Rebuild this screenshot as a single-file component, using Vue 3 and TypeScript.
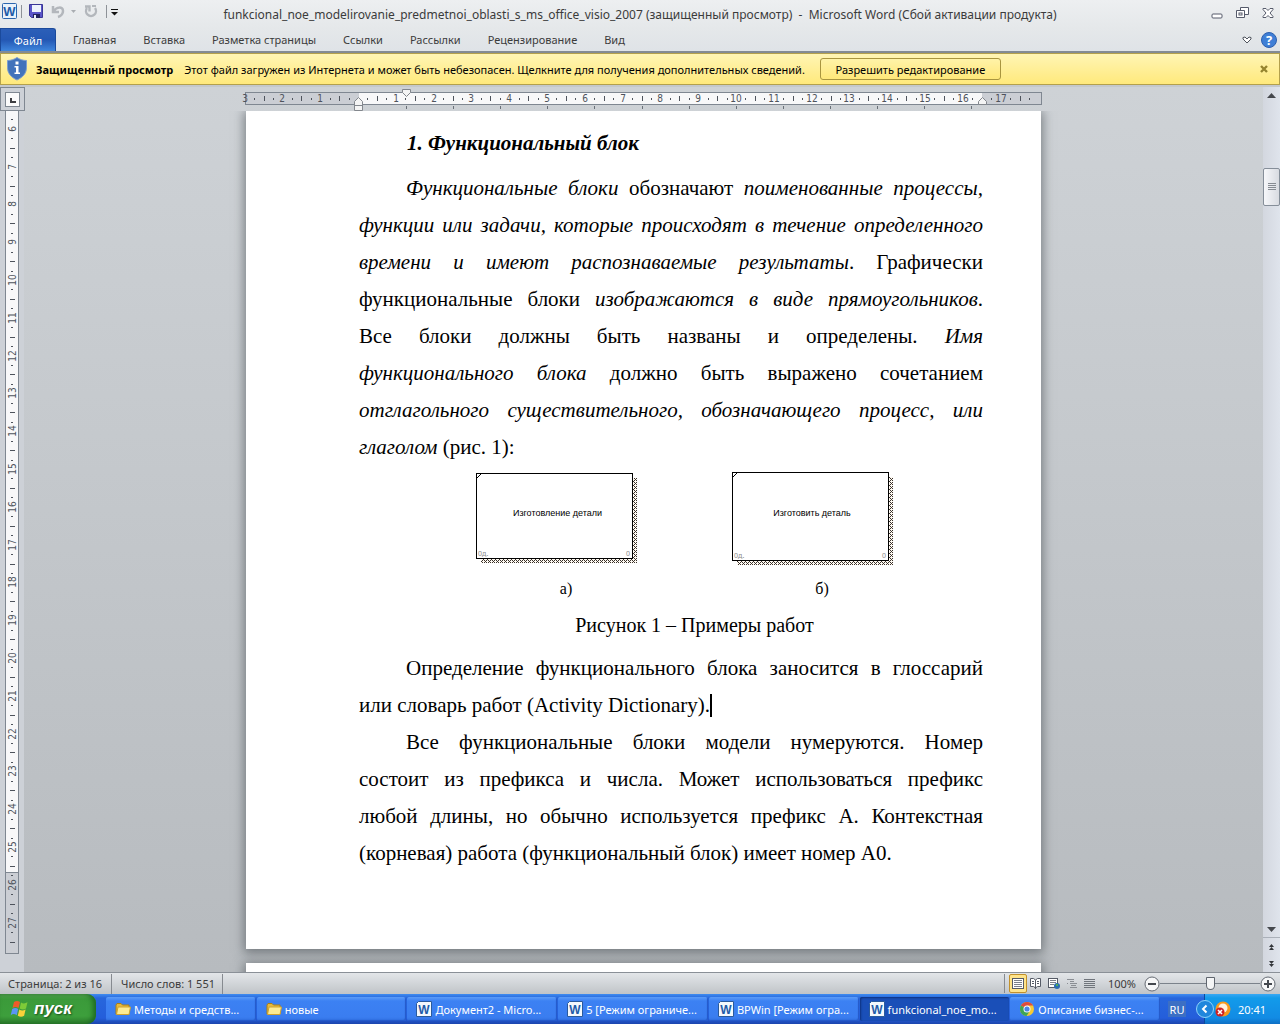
<script setup lang="ts">
import { ref } from 'vue'

interface Run {
  text: string
  italic?: boolean
}
interface Line {
  runs: Run[]
  indent?: boolean
  last?: boolean
  caret?: boolean
}
interface Task {
  icon: 'folder' | 'word' | 'chrome'
  label: string
  active?: boolean
}
interface Mark {
  pos: number
  label?: string
  half?: boolean
}

const CM = 37.8
const tabs = ['Главная', 'Вставка', 'Разметка страницы', 'Ссылки', 'Рассылки', 'Рецензирование', 'Вид']
const zoom = ref(50)

const r = (text: string): Run => ({ text })
const i = (text: string): Run => ({ text, italic: true })

const intro: Line[] = [
  { indent: true, runs: [i('Функциональные блоки'), r(' обозначают '), i('поименованные процессы,')] },
  { runs: [i('функции или задачи, которые происходят в течение определенного')] },
  { runs: [i('времени и имеют распознаваемые результаты'), r('. Графически')] },
  { runs: [r('функциональные блоки '), i('изображаются в виде прямоугольников'), r('.')] },
  { runs: [r('Все блоки должны быть названы и определены. '), i('Имя')] },
  { runs: [i('функционального блока'), r(' должно быть выражено сочетанием')] },
  { runs: [i('отглагольного существительного, обозначающего процесс, или')] },
  { last: true, runs: [i('глаголом'), r(' (рис. 1):')] },
]
const definition: Line[] = [
  { indent: true, runs: [r('Определение функционального блока заносится в глоссарий')] },
  { last: true, caret: true, runs: [r('или словарь работ (Activity Dictionary).')] },
]
const numbering: Line[] = [
  { indent: true, runs: [r('Все функциональные блоки модели нумеруются. Номер')] },
  { runs: [r('состоит из префикса и числа. Может использоваться префикс')] },
  { runs: [r('любой длины, но обычно используется префикс А. Контекстная')] },
  { last: true, runs: [r('(корневая) работа (функциональный блок) имеет номер А0.')] },
]

const figures = [
  { label: 'Изготовление детали', caption: 'а)', top: 1, height: 86, x: 38, width: 87 },
  { label: 'Изготовить деталь', caption: 'б)', top: 0, height: 89, x: 42, width: 76 },
]

function marks(origin: number, from: number, to: number, min: number, max: number): Mark[] {
  const out: Mark[] = []
  for (let q = from * 4; q <= to * 4; q++) {
    if (q === 0) continue
    const pos = Math.round(origin + (q * CM) / 4)
    if (pos < min || pos > max) continue
    if (q % 4 === 0) out.push({ pos, label: String(Math.abs(q / 4)) })
    else out.push({ pos, half: q % 2 === 0 })
  }
  return out
}
const across = marks(113, -3, 18, 0, 788).filter((m) => m.pos < 732 || m.pos > 742)
const down = marks(-209, 5, 28, 6, 836)
const stops = Array.from({ length: 13 }, (_, n) => Math.round(161 + n * 47.1))

const tasks: Task[] = [
  { icon: 'folder', label: 'Методы и средств...' },
  { icon: 'folder', label: 'новые' },
  { icon: 'word', label: 'Документ2 - Micro...' },
  { icon: 'word', label: '5 [Режим ограниче...' },
  { icon: 'word', label: 'BPWin [Режим огра...' },
  { icon: 'word', label: 'funkcional_noe_mo...', active: true },
  { icon: 'chrome', label: 'Описание бизнес-...' },
]
</script>

<template>
  <div class="desktop">
    <header class="titlebar">
      <div class="quick">
        <svg width="17" height="17" viewBox="0 0 17 17">
          <rect x="1.500" y=".5" width="14" height="15" rx="1" fill="#e9f2fb" stroke="#2c66ae" />
          <text x="8.500" y="13" class="wordmark" text-anchor="middle" font-size="13">W</text>
        </svg>
        <span class="divider"></span>
        <button class="bare" aria-label="Сохранить">
          <svg width="15" height="15" viewBox="0 0 15 15">
            <path d="M.5 .5h13v13H2.500l-2-2z" fill="#5a55c8" stroke="#3a3796" />
            <rect x="3" y="1" width="9" height="7" fill="#eef3fc" />
            <rect x="4" y="10" width="7" height="4" fill="#23235e" />
            <rect x="5" y="11" width="2" height="3" fill="#e9eefc" />
          </svg>
        </button>
        <button class="bare undo" aria-label="Отменить">
          <svg width="26" height="15" viewBox="0 0 26 15">
            <path d="M2 2v6h6M3 7c2-4 9-5 9 0 0 3-2 5-5 6" fill="none" stroke="#b3b7bc" stroke-width="2.500" />
            <path d="M20 6h5l-2.500 3z" fill="#a9adb2" />
          </svg>
        </button>
        <button class="bare" aria-label="Повторить">
          <svg width="14" height="15" viewBox="0 0 14 15">
            <path d="M3 4a5 5 0 1 0 8 0M1 2.500h4.500v5" fill="none" stroke="#b3b7bc" stroke-width="2.400" />
            <path d="M8 1h4v2H8z" fill="#b3b7bc" />
          </svg>
        </button>
        <span class="divider late"></span>
        <button class="bare" aria-label="Настройка панели">
          <svg width="7" height="8" viewBox="0 0 7 8">
            <path d="M0 1.500h7" stroke="#111" />
            <path d="M0 4h7L3.500 7.500z" fill="#111" />
          </svg>
        </button>
      </div>
      <h1>funkcional_noe_modelirovanie_predmetnoi_oblasti_s_ms_office_visio_2007 (защищенный просмотр)&nbsp; -&nbsp; Microsoft Word (Сбой активации продукта)</h1>
      <div class="winbuttons">
        <button class="bare" aria-label="Свернуть">
          <svg width="12" height="12" viewBox="0 0 12 12">
            <rect x="1" y="7" width="10" height="4" rx="1" fill="#fff" stroke="#565b6b" />
          </svg>
        </button>
        <button class="bare" aria-label="Восстановить">
          <svg width="13" height="12" viewBox="0 0 13 12">
            <path d="M4.500 .5h8v7h-8z" fill="#fff" stroke="#565b6b" />
            <path d="M.5 3.500h8v7h-8z" fill="#fff" stroke="#565b6b" />
            <rect x="3" y="6" width="3" height="2" fill="#fff" stroke="#565b6b" />
          </svg>
        </button>
        <button class="bare" aria-label="Закрыть">
          <svg width="12" height="12" viewBox="0 0 12 12">
            <path d="M1 1.500h3l2 2 2-2h3v1L8 6l3 3.500v1H8l-2-2-2 2H1v-1L4 6 1 2.500z" fill="#fff" stroke="#565b6b" />
          </svg>
        </button>
      </div>
    </header>

    <nav class="ribbon">
      <button class="file">Файл</button>
      <button v-for="tab in tabs" :key="tab" class="tab">{{ tab }}</button>
      <div class="ribbon-end">
        <button class="bare" aria-label="Развернуть ленту">
          <svg width="10" height="8" viewBox="0 0 10 8">
            <path d="M1 1.500L3 1l2 2 2-2 2 .5v1.500L5 7 1 3z" fill="#fff" stroke="#4e535c" />
          </svg>
        </button>
        <button class="bare" aria-label="Справка">
          <svg width="16" height="16" viewBox="0 0 16 16">
            <circle cx="8" cy="8" r="7.500" fill="#3f7fd6" stroke="#2d5fae" />
            <text x="8" y="13" text-anchor="middle" class="help" font-size="13">?</text>
          </svg>
        </button>
      </div>
    </nav>

    <section class="notice">
      <svg width="20" height="24" viewBox="0 0 20 24">
        <path d="M10 .5c3 2 6 3 9.500 3v7c0 6-4 10-9.500 12.500C4.500 20.500.5 16.500.5 10.500v-7C4 3.500 7 2.500 10 .5z" fill="#4273bb" stroke="#7f9fcd" />
        <path d="M8.500 4.500h3v3h-3zM7.500 9h4v6.500h1.500V17h-5.500v-1.500H9V10.500H7.500z" fill="#fff" />
      </svg>
      <strong>Защищенный просмотр</strong>
      <span class="message">Этот файл загружен из Интернета и может быть небезопасен. Щелкните для получения дополнительных сведений.</span>
      <button class="enable">Разрешить редактирование</button>
      <button class="bare dismiss" aria-label="Скрыть сообщение">
        <svg width="8" height="8" viewBox="0 0 8 8">
          <path d="M1 1l6 6M7 1L1 7" stroke="#95842f" stroke-width="2.400" />
        </svg>
      </button>
    </section>

    <main class="workspace">
      <aside class="side">
        <button class="tabstop" aria-label="Позиция табуляции">
          <svg width="15" height="15" viewBox="0 0 15 15">
            <rect x=".5" y=".5" width="14" height="14" fill="#fbfbfb" stroke="#7f8791" />
            <path d="M6 6v4h5" fill="none" stroke="#3e3e42" stroke-width="2" />
          </svg>
        </button>
        <svg class="vruler" width="15" height="843" viewBox="0 0 15 843">
          <rect x=".5" y="-1" width="13" height="843.500" fill="#cbced4" stroke="#7f8791" />
          <rect x="1" y="0" width="12" height="761" fill="#f8f8f9" />
          <path d="M0 761.500h14" stroke="#7f8791" />
          <template v-for="m in down" :key="m.pos">
            <text v-if="m.label" class="mark" text-anchor="middle" :transform="`translate(11 ${m.pos}) rotate(-90)`">{{ m.label }}</text>
            <rect v-else :x="m.half ? 5 : 6" :y="m.pos" :width="m.half ? 5 : 2" height="1" fill="#4e535c" />
          </template>
        </svg>
      </aside>

      <div class="canvas">
        <div class="hruler">
          <svg width="797" height="24" viewBox="0 0 797 24">
            <rect x=".5" y="5.500" width="796" height="12" fill="#cbced4" stroke="#7f8791" />
            <rect x="114" y="6" width="623" height="11" fill="#f8f8f9" />
            <template v-for="m in across" :key="m.pos">
              <text v-if="m.label" class="mark" text-anchor="middle" :x="m.pos" y="15">{{ m.label }}</text>
              <rect v-else :x="m.pos" :y="m.half ? 9 : 11" width="1" :height="m.half ? 5 : 2" fill="#4e535c" />
            </template>
            <rect v-for="s in stops" :key="s" :x="s" y="19" width="1" height="3" fill="#6a7078" />
            <path d="M157.500 2.500h8v3l-4 4-4-4z" fill="#f4f4f4" stroke="#83878d" />
            <path d="M113.500 10.500l4 4v9h-8v-9zM109.500 18.500h8" fill="#f4f4f4" stroke="#83878d" />
            <path d="M737.500 10.500l4 4v3h-8v-3z" fill="#f4f4f4" stroke="#83878d" />
          </svg>
        </div>

        <div class="pages">
          <article class="page">
            <h2>1. Функциональный блок</h2>
            <p>
              <span v-for="(line, n) in intro" :key="n" class="line" :class="{ indent: line.indent, last: line.last }"><template v-for="(run, k) in line.runs" :key="k"><em v-if="run.italic">{{ run.text }}</em><template v-else>{{ run.text }}</template></template></span>
            </p>
            <div class="figures">
              <figure v-for="f in figures" :key="f.caption">
                <svg width="162" height="94" viewBox="0 0 162 94">
                  <defs>
                    <pattern id="hatch" width="4" height="4" patternUnits="userSpaceOnUse">
                      <rect width="4" height="4" fill="#fffaf2" />
                      <path d="M0 0h1v1H0zM1 1h1v1H1zM2 0h1v1H2zM0 2h1v1H0zM3 3h1v1H3zM2 2h1v1H2z" fill="#3a322c" />
                    </pattern>
                  </defs>
                  <rect x="5" :y="f.top + 5" width="156" :height="f.height - 1" fill="url(#hatch)" />
                  <rect x=".5" :y="f.top + 0.5" width="156" :height="f.height - 1" fill="#fff" stroke="#000" />
                  <path :d="`M1 ${f.top + 5}l4-4`" stroke="#000" />
                  <text :x="f.x + f.width / 2" y="44" class="block-name" text-anchor="middle">{{ f.label }}</text>
                  <text x="2" :y="f.top + f.height - 3" class="block-note">0д.</text>
                  <text x="154" :y="f.top + f.height - 3" class="block-note" text-anchor="end">0</text>
                </svg>
                <figcaption>{{ f.caption }}</figcaption>
              </figure>
            </div>
            <p class="caption">Рисунок 1 – Примеры работ</p>
            <p>
              <span v-for="(line, n) in definition" :key="n" class="line" :class="{ indent: line.indent, last: line.last }"><template v-for="(run, k) in line.runs" :key="k">{{ run.text }}</template><span v-if="line.caret" class="caret"></span></span>
            </p>
            <p>
              <span v-for="(line, n) in numbering" :key="n" class="line" :class="{ indent: line.indent, last: line.last }"><template v-for="(run, k) in line.runs" :key="k">{{ run.text }}</template></span>
            </p>
          </article>
          <article class="page next"></article>
        </div>
      </div>

      <div class="scroll">
        <button class="bare" aria-label="Вверх">
          <svg width="9" height="5" viewBox="0 0 9 5"><path d="M0 5h9L4.500 0z" fill="#45484d" /></svg>
        </button>
        <div class="track">
          <div class="thumb">
            <svg width="8" height="8" viewBox="0 0 8 8"><path d="M0 .5h8M0 2.500h8M0 4.500h8M0 6.500h8" stroke="#868b92" /></svg>
          </div>
        </div>
        <button class="bare down" aria-label="Вниз">
          <svg width="9" height="5" viewBox="0 0 9 5"><path d="M0 0h9L4.500 5z" fill="#45484d" /></svg>
        </button>
        <button class="bare jump" aria-label="Предыдущая страница">
          <svg width="5" height="6" viewBox="0 0 5 6"><path d="M0 3h5L2.500 0zM0 6h5L2.500 3z" fill="#33363a" /></svg>
        </button>
        <button class="bare jump" aria-label="Следующая страница">
          <svg width="5" height="6" viewBox="0 0 5 6"><path d="M0 0h5L2.500 3zM0 3h5L2.500 6z" fill="#33363a" /></svg>
        </button>
      </div>
    </main>

    <footer class="status">
      <span class="cell">Страница: 2 из 16</span>
      <span class="cell words">Число слов: 1 551</span>
      <div class="views">
        <button class="bare view on" aria-label="Разметка страницы">
          <svg width="12" height="11" viewBox="0 0 12 11">
            <rect x=".5" y=".5" width="11" height="10" fill="#fff" stroke="#565b66" />
            <path d="M2 2.500h8M2 4.500h8M2 6.500h8M2 8.500h8" stroke="#7b808a" />
          </svg>
        </button>
        <button class="bare view" aria-label="Режим чтения">
          <svg width="11" height="11" viewBox="0 0 11 11">
            <path d="M.5 .5h3l2 1.500 2-1.500h3v8h-3l-2 1.500-2-1.500h-3zM5.500 2v9" fill="#fff" stroke="#565b66" />
            <path d="M2 3.500h2M2 5.500h2M7 3.500h2M7 5.500h2" stroke="#565b66" />
          </svg>
        </button>
        <button class="bare view" aria-label="Веб-документ">
          <svg width="12" height="11" viewBox="0 0 12 11">
            <rect x=".5" y=".5" width="9" height="9" fill="#fff" stroke="#565b66" />
            <path d="M2 2.500h6M2 4.500h6M2 6.500h4" stroke="#7b808a" />
            <circle cx="9" cy="8" r="3" fill="#2b6cb0" />
            <path d="M8 6h2v2H8z" fill="#4fae52" />
          </svg>
        </button>
        <button class="bare view" aria-label="Структура">
          <svg width="10" height="9" viewBox="0 0 10 9"><path d="M0 .5h7M3 2.500h4M3 4.500h7M4 6.500h5M3 8.500h7M0 4.500h1" stroke="#8a8e94" /></svg>
        </button>
        <button class="bare view" aria-label="Черновик">
          <svg width="11" height="9" viewBox="0 0 11 9"><path d="M0 .5h11M0 2.500h11M0 4.500h11M0 6.500h11M0 8.500h11" stroke="#6f747b" /></svg>
        </button>
      </div>
      <label class="percent" for="zoom">100%</label>
      <button class="bare" aria-label="Уменьшить">
        <svg width="16" height="16" viewBox="0 0 16 16">
          <circle cx="8" cy="8" r="7" fill="#f6f7f8" stroke="#666b74" /><path d="M4 8h8" stroke="#43474e" stroke-width="2" />
        </svg>
      </button>
      <input id="zoom" v-model="zoom" class="slider" type="range" min="0" max="100" />
      <button class="bare" aria-label="Увеличить">
        <svg width="16" height="16" viewBox="0 0 16 16">
          <circle cx="8" cy="8" r="7" fill="#f6f7f8" stroke="#666b74" /><path d="M4 8h8M8 4v8" stroke="#43474e" stroke-width="2" />
        </svg>
      </button>
    </footer>

    <div class="taskbar">
      <button class="start">
        <svg width="20" height="20" viewBox="0 0 20 20">
          <path d="M4 3c2-1.500 4-1.500 6 0L8.500 9C6.500 7.500 4.500 7.500 2.500 9z" fill="#ef5a2a" />
          <path d="M11 3.500c2 1.200 4 1.200 6.500-.2L16 9.500c-2 1.300-4 1.300-6.300 0z" fill="#7ecb38" />
          <path d="M2.200 10c2-1.300 4-1.300 6 0l-1.500 6.200c-2-1.500-4-1.500-6 0z" fill="#5b95f5" />
          <path d="M9.300 10.500c2 1.200 4 1.200 6.300 0l-1.500 6.200c-2 1.300-4 1.300-6.300 0z" fill="#fbd13a" />
        </svg>
        <span>пуск</span>
      </button>
      <div class="tasks">
        <button v-for="t in tasks" :key="t.label" class="task" :class="{ active: t.active }">
          <svg v-if="t.icon === 'folder'" width="16" height="16" viewBox="0 0 16 16">
            <path d="M1 4l1-1.500h4L7.500 4H14v9H1z" fill="#e6b93c" stroke="#a87e16" />
            <path d="M3 6h12.500L14 13.500H1.500z" fill="#fdeb92" stroke="#d0a32e" />
          </svg>
          <svg v-else-if="t.icon === 'word'" width="16" height="16" viewBox="0 0 16 16">
            <path d="M2.500 .5h13v15H.5v-13z" fill="#f3f8fd" stroke="#2a5a9c" />
            <text x="8" y="13" class="wordmark" text-anchor="middle" font-size="12">W</text>
          </svg>
          <svg v-else width="16" height="16" viewBox="0 0 16 16">
            <circle cx="8" cy="8" r="7" fill="#f6cb35" />
            <path d="M8 8L1.900 4.500A7 7 0 0 1 14.100 4.500H8z" fill="#dd4b3e" />
            <path d="M1.900 4.500A7 7 0 0 0 7.500 15L11 9.800 8 8z" fill="#3fa557" />
            <circle cx="8" cy="8" r="3.500" fill="#fff" />
            <circle cx="8" cy="8" r="2.600" fill="#4a86e8" />
          </svg>
          <span>{{ t.label }}</span>
        </button>
      </div>
      <button class="lang">RU</button>
      <div class="tray">
        <button class="bare expand" aria-label="Показать значки">
          <svg width="18" height="18" viewBox="0 0 18 18">
            <circle cx="9" cy="9" r="8.500" fill="#2086dc" stroke="#8fd2fa" />
            <path d="M10.500 5.500L7 9l3.500 3.500" fill="none" stroke="#fff" stroke-width="2" />
          </svg>
        </button>
        <svg width="16" height="16" viewBox="0 0 16 16">
          <circle cx="8" cy="8" r="7.500" fill="#f79a1e" />
          <circle cx="8" cy="7" r="4.500" fill="#fff2dc" />
          <circle cx="5" cy="11" r="4.500" fill="#cf2222" />
          <path d="M3 9l4 4M7 9l-4 4" stroke="#fff" stroke-width="1.600" />
        </svg>
        <time>20:41</time>
      </div>
    </div>
  </div>
</template>

<style>
html,
body {
  margin: 0;
  background: #c4c8cc;
}
</style>

<style scoped>
.desktop {
  display: flex;
  flex-direction: column;
  height: 100vh;
  overflow: hidden;
  font: 11px "Noto Sans", sans-serif;
  color: #3b3b3b;
}
button {
  font: inherit;
  color: inherit;
  border: 0;
  background: none;
  padding: 0;
  margin: 0;
  white-space: nowrap;
}
svg {
  display: block;
  flex: none;
}
.bare {
  display: flex;
  align-items: center;
  justify-content: center;
}
.wordmark {
  font-family: "Liberation Sans", sans-serif;
  font-weight: bold;
  fill: #1f5ca8;
}
.help {
  font-family: "Open Sans", sans-serif;
  font-weight: bold;
  fill: #fff;
}

.titlebar {
  display: flex;
  align-items: center;
  height: 28px;
  background: linear-gradient(#edeff1, #e5e8ea);
}
.quick {
  display: flex;
  align-items: center;
  width: 122px;
  box-sizing: border-box;
  padding-left: 1px;
  margin-bottom: 5px;
}
.divider {
  width: 1px;
  height: 13px;
  background: #8e9298;
  margin: 0 7px 0 3px;
}
.divider.late {
  margin: 0 4px 0 8px;
}
.undo {
  margin: 0 7px;
}
h1 {
  flex: 1;
  margin: 0;
  text-align: center;
  font-size: 12px;
  font-weight: normal;
  white-space: nowrap;
}
.winbuttons {
  display: flex;
  justify-content: flex-end;
  gap: 13px;
  width: 122px;
  box-sizing: border-box;
  padding-right: 6px;
  margin-bottom: 3px;
}

.ribbon {
  display: flex;
  align-items: stretch;
  height: 23px;
  background: linear-gradient(#e5e8ea, #dfe3e7);
  border-bottom: 2px solid #838b94;
}
.file {
  width: 56px;
  background: linear-gradient(#2c5fb8, #2458b4 50%, #3f86dd);
  border: 1px solid #1b4a9b;
  border-bottom: 0;
  border-radius: 0 3px 0 0;
  color: #fff;
  margin-right: 3px;
}
.tab {
  padding: 0 13px 0 14px;
}
.ribbon-end {
  margin-left: auto;
  display: flex;
  align-items: center;
  gap: 9px;
  padding-right: 3px;
}

.notice {
  display: flex;
  align-items: center;
  height: 32px;
  box-sizing: border-box;
  border: 1px solid #b3a04c;
  background: linear-gradient(#fff5b4, #ffe97c);
  color: #000;
  padding: 0 11px 0 6px;
}
.notice strong {
  margin: 0 11px 0 9px;
  white-space: nowrap;
}
.message {
  white-space: nowrap;
}
.enable {
  height: 22px;
  width: 181px;
  margin-left: 15px;
  border: 1px solid #a9953f;
  border-radius: 3px;
  background: linear-gradient(#fff3a8, #ffe87a);
}
.dismiss {
  margin-left: auto;
}

.workspace {
  flex: 1;
  min-height: 0;
  display: flex;
  margin-top: 2px;
  background: linear-gradient(#ced2d6, #b7bbbf);
}
.side {
  width: 24px;
  flex: none;
  background: #cdd1d7;
}
.tabstop {
  display: flex;
  align-items: center;
  justify-content: center;
  width: 25px;
  height: 24px;
  border: 1px solid #7f8791;
}
.vruler {
  margin-left: 5px;
}
.mark {
  font: 10px "DejaVu Sans Condensed", "DejaVu Sans", sans-serif;
  fill: #4e535c;
}
.canvas {
  flex: 1;
  min-width: 0;
  display: flex;
  flex-direction: column;
}
.hruler {
  display: flex;
  justify-content: center;
  height: 24px;
  flex: none;
}
.hruler svg {
  overflow: visible;
}
.pages {
  flex: 1;
  min-height: 0;
  overflow: hidden;
  display: flex;
  flex-direction: column;
  align-items: center;
  gap: 14px;
}
.page {
  flex: none;
  width: 795px;
  box-sizing: border-box;
  padding: 14px 58px 77px 113px;
  background: #fff;
  box-shadow: 0 2px 10px 2px rgba(70, 76, 82, 0.6);
  font: 21px/37px "Liberation Serif", serif;
  color: #000;
}
.next {
  min-height: 200px;
}
h2 {
  margin: 0 0 8px 48px;
  font: italic bold 21px/37px "Liberation Serif", serif;
}
.page p {
  margin: 0;
}
.line {
  display: block;
  text-align: justify;
  text-align-last: justify;
  white-space: nowrap;
}
.line.last {
  text-align-last: left;
}
.line.indent {
  padding-left: 47px;
}
.figures {
  display: flex;
  gap: 94px;
  padding: 6px 0 0 117px;
}
figure {
  margin: 0;
}
figcaption {
  padding: 5px 0 0 18px;
  text-align: center;
  font-size: 16px;
  line-height: 36px;
}
.block-name {
  font: 9px "Liberation Sans", sans-serif;
}
.block-note {
  font: 7px "Noto Sans", sans-serif;
  fill: #8a8a8a;
}
.page .caption {
  text-align: center;
  font-size: 20px;
  padding: 0 0 6px 47px;
}
.caret {
  display: inline-block;
  width: 2px;
  height: 23px;
  background: #000;
  vertical-align: -5px;
}

.scroll {
  width: 17px;
  flex: none;
  display: flex;
  flex-direction: column;
  background: linear-gradient(90deg, #d3d7df, #dfe4ec);
}
.scroll .bare {
  height: 17px;
}
.track {
  flex: 1;
  padding-top: 64px;
}
.thumb {
  height: 38px;
  box-sizing: border-box;
  border: 1px solid #858e99;
  border-radius: 2px;
  background: linear-gradient(90deg, #f6f7fa, #d8dbe1);
  display: flex;
  align-items: center;
  justify-content: center;
}
.scroll .down {
  border-bottom: 1px solid #aab0b9;
}

.status {
  display: flex;
  align-items: center;
  height: 22px;
  box-sizing: border-box;
  border-top: 1px solid #8a9097;
  background: linear-gradient(#e3e6e9, #c0c4c8);
  padding: 0 4px 0 8px;
}
.cell {
  width: 103px;
  border-right: 1px solid #868a90;
  line-height: 20px;
  white-space: nowrap;
}
.words {
  padding-left: 9px;
  width: 101px;
}
.views {
  margin-left: auto;
  display: flex;
  align-items: center;
  border-left: 1px solid #868a90;
  padding-left: 4px;
  margin-right: 9px;
}
.view {
  width: 18px;
  height: 19px;
}
.view.on {
  box-sizing: border-box;
  border: 1px solid #c2912c;
  border-radius: 2px;
  background: #ffe48a;
}
.percent {
  margin-right: 8px;
}
.slider {
  appearance: none;
  width: 100px;
  height: 14px;
  margin: 0;
  background: linear-gradient(#7b828b, #7b828b) center / 100% 1px no-repeat;
}
.slider::-webkit-slider-thumb {
  appearance: none;
  width: 9px;
  height: 13px;
  border: 1px solid #5f656e;
  border-radius: 1px 1px 5px 5px;
  background: #f4f5f6;
}

.taskbar {
  display: flex;
  align-items: stretch;
  height: 30px;
  background: linear-gradient(#3f8cf0, #2766dc 4px, #245edb 24px, #1b45ad);
  color: #fff;
}
.start {
  display: flex;
  align-items: center;
  gap: 4px;
  width: 96px;
  padding-left: 10px;
  border-radius: 0 9px 9px 0;
  background: linear-gradient(#5aa655, #3b9a3a 5px, #3d9f3c 22px, #2c7a2c);
  box-shadow: inset -3px 0 5px #1e6b22;
  font: italic bold 17px "Liberation Sans", sans-serif;
  text-shadow: 1px 1px 2px #174a19;
}
.tasks {
  flex: 1;
  min-width: 0;
  display: flex;
  gap: 1px;
  padding: 3px 8px 3px 10px;
}
.task {
  flex: 0 1 150px;
  min-width: 0;
  display: flex;
  align-items: center;
  gap: 3px;
  padding-left: 9px;
  border-radius: 2px;
  background: linear-gradient(#5b9bf8, #3c81f3 4px, #3a7df0 20px, #3070e0);
  box-shadow: inset -1px -1px 1px #2458c8;
  overflow: hidden;
}
.task.active {
  background: #1a4fb8;
  box-shadow: inset 1px 1px 2px #0e327e;
}
.lang {
  width: 18px;
  height: 16px;
  align-self: center;
  background: #3c6fc4;
  margin-right: 18px;
}
.tray {
  display: flex;
  align-items: center;
  width: 75px;
  background: linear-gradient(#38a8f4, #129bea 4px, #128be4 24px, #0f6fc4);
  border-left: 1px solid #0c4a9e;
}
.expand {
  margin: 0 1px 0 -9px;
}
.tray time {
  margin-left: 7px;
}
</style>
